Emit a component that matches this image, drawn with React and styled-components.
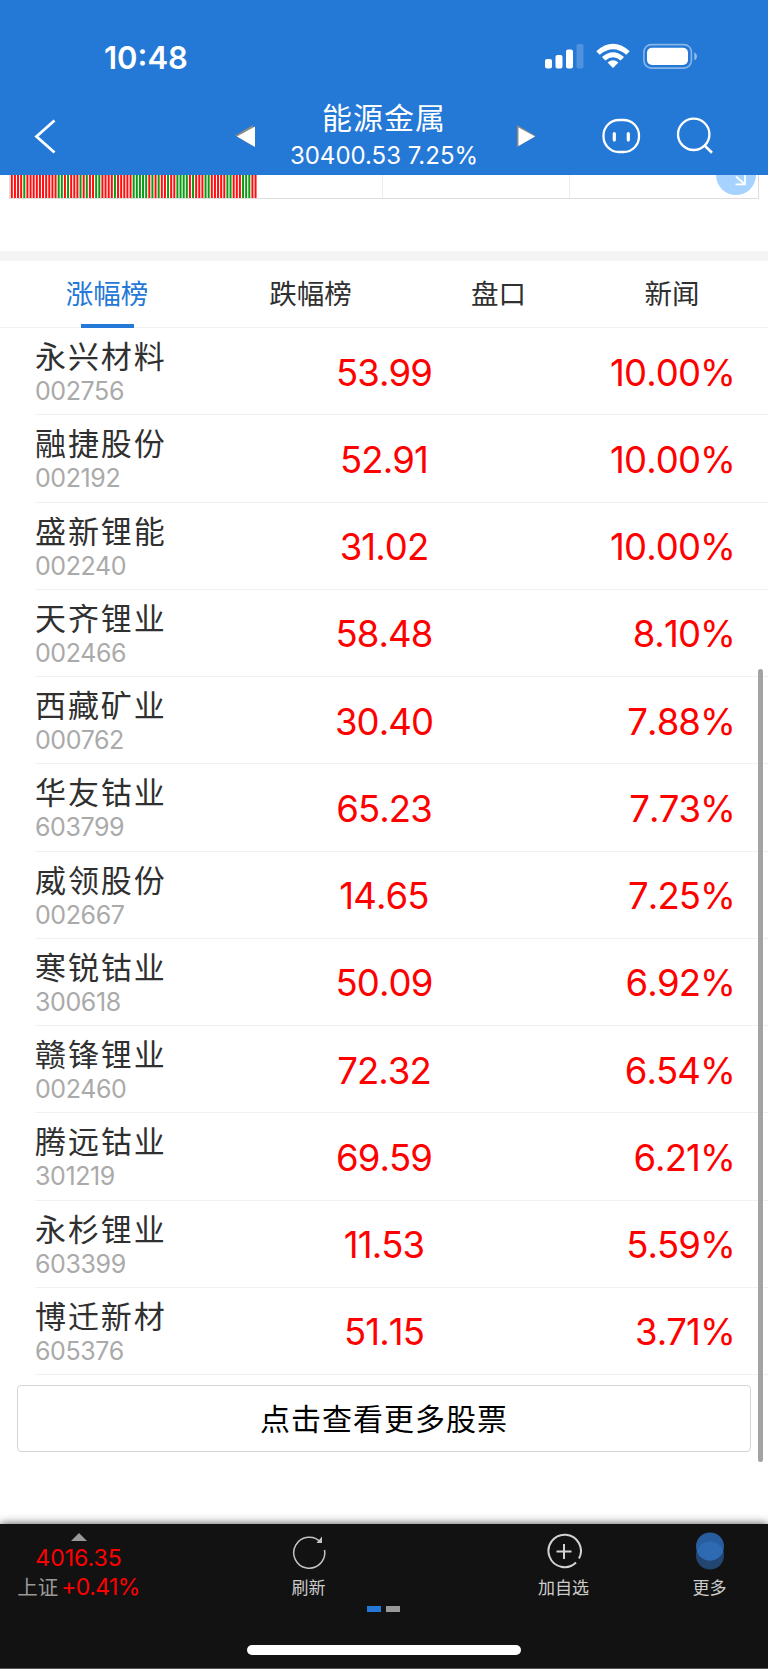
import React from "react"
import styled, { createGlobalStyle } from "styled-components"

const colors = {
  blue: "#2478d6",
  red: "#ff0000",
  dark: "#121212",
  line: "#f1f1f1",
}

const latin = `Inter, "Noto Sans CJK SC", sans-serif`

const GlobalStyle = createGlobalStyle`
  * {
    box-sizing: border-box;
  }
  body {
    margin: 0;
    background: #fff;
    font-family: ${latin};
  }
`

const stocks = [
  { name: "永兴材料", code: "002756", price: "53.99", change: "10.00%" },
  { name: "融捷股份", code: "002192", price: "52.91", change: "10.00%" },
  { name: "盛新锂能", code: "002240", price: "31.02", change: "10.00%" },
  { name: "天齐锂业", code: "002466", price: "58.48", change: "8.10%" },
  { name: "西藏矿业", code: "000762", price: "30.40", change: "7.88%" },
  { name: "华友钴业", code: "603799", price: "65.23", change: "7.73%" },
  { name: "威领股份", code: "002667", price: "14.65", change: "7.25%" },
  { name: "寒锐钴业", code: "300618", price: "50.09", change: "6.92%" },
  { name: "赣锋锂业", code: "002460", price: "72.32", change: "6.54%" },
  { name: "腾远钴业", code: "301219", price: "69.59", change: "6.21%" },
  { name: "永杉锂业", code: "603399", price: "11.53", change: "5.59%" },
  { name: "博迁新材", code: "605376", price: "51.15", change: "3.71%" },
]

// minutes in which the index fell, the rest are red
const falling = [
  4, 15, 16, 18, 22, 24, 27, 28, 33, 39, 40, 41, 42, 43, 45, 47, 50, 53, 54,
  55, 56, 58, 62, 63, 69, 70, 74, 75, 76,
]

const VolumeBars = () => (
  <svg width="248" height="23" viewBox="0 0 248 23">
    {Array.from({ length: 79 }, (_, i) => (
      <rect
        key={i}
        x={0.8 + i * 3.125}
        width="2"
        height="23"
        fill={falling.includes(i) ? "#0c9a14" : "#ff0c0c"}
      />
    ))}
  </svg>
)

const StatusIcons = () => (
  <svg width="153" height="28" viewBox="0 0 153 28">
    <g fill="#fff">
      <rect x="0" y="16" width="7" height="9.4" rx="2" />
      <rect x="10.5" y="12" width="7" height="13.4" rx="2" />
      <rect x="21" y="6.5" width="7" height="18.9" rx="2" />
      <rect x="31.5" y="1" width="7" height="24.4" rx="2" opacity=".2" />
      <path d="M51.3 8.2Q68 -6.6 84.7 8.2L81.3 11.7Q68 .6 54.7 11.7Z" />
      <path d="M57 14Q68 4.3 79 14L75.6 17.4Q68 11.2 60.4 17.4Z" />
      <path d="M62.6 19.5Q68 15 73.4 19.5L68 25Z" />
      <rect x="102" y="4.7" width="41" height="17.3" rx="5" />
      <path d="M149.3 9.2Q152 10.5 152 13.2Q152 16 149.3 17.3Z" opacity=".5" />
    </g>
    <rect x="98.9" y="1.6" width="47.5" height="23.5" rx="7.5" fill="none" stroke="#fff" strokeOpacity=".45" strokeWidth="1.6" />
  </svg>
)

const BackIcon = () => (
  <svg width="24" height="38" viewBox="0 0 24 38" fill="none" stroke="#fff" strokeWidth="2.8">
    <path d="M20.5 3.5L2.5 19.5L20.5 35.5" />
  </svg>
)

const PrevIcon = () => (
  <svg width="22" height="24" viewBox="0 0 22 24">
    <path d="M1 11.5L19 1V22Z" fill="#8b8b86" />
    <path d="M3 12.5L21 2.5V23Z" fill="#fff" />
  </svg>
)

const NextIcon = () => (
  <svg width="22" height="24" viewBox="0 0 22 24">
    <path d="M1 1L20 12L1 23Z" fill="#8b8b86" />
    <path d="M2.5 3.5L19 12.5L2.5 22Z" fill="#fff" />
  </svg>
)

const RobotIcon = () => (
  <svg width="40" height="36" viewBox="0 0 40 36" fill="none" stroke="#fff">
    <rect x="1.5" y="2" width="35.5" height="32" rx="15.5" strokeWidth="2.3" />
    <path d="M12.3 15.5V22M26.3 15.5V22" strokeWidth="3.2" strokeLinecap="round" />
  </svg>
)

const SearchIcon = () => (
  <svg width="40" height="40" viewBox="0 0 40 40" fill="none" stroke="#fff">
    <circle cx="17.7" cy="18.3" r="15.7" strokeWidth="2.3" />
    <path d="M28 29L36 36.8" strokeWidth="2.6" />
  </svg>
)

const ShrinkIcon = () => (
  <svg width="40" height="21" viewBox="0 0 40 21">
    <circle cx="20" cy="0" r="20" fill="#a6d2ff" />
    <path d="M20 1.5L28.5 9M29 0V9.3H19.5" fill="none" stroke="#fff" strokeWidth="1.7" />
  </svg>
)

const RefreshIcon = () => (
  <svg width="34" height="38" viewBox="0 0 34 38" fill="none">
    <path d="M29 10.6A15.5 15.5 0 1 0 32.5 18" stroke="#c4c4c4" strokeWidth="1.5" />
    <path d="M30 4.5V11H24.5Z" fill="#c4c4c4" />
  </svg>
)

const AddIcon = () => (
  <svg width="36" height="38" viewBox="0 0 36 38" fill="none" stroke="#d2d2d2" strokeWidth="2">
    <path d="M30 30.5A16.2 16.2 0 1 1 33 26.5" />
    <path d="M18 12V27M10.5 19.5H25.5" />
  </svg>
)

const MoreIcon = () => (
  <svg width="30" height="38" viewBox="0 0 30 38">
    <circle cx="15" cy="23.5" r="14" fill="#22466f" />
    <circle cx="15" cy="14.5" r="14" fill="#285d9f" />
    <path d="M1.7 19A14 14 0 0 1 28.3 19A14 14 0 0 1 1.7 19Z" fill="#2d6ab2" />
  </svg>
)

const StockRow = ({ stock }) => {
  const { name, code, price, change } = stock
  return (
    <Row>
      <div>
        <Name>{name}</Name>
        <Code>{code}</Code>
      </div>
      <Figure $align="center">{price}</Figure>
      <Figure $align="right">{change}</Figure>
    </Row>
  )
}

const App = () => (
  <Screen>
    <GlobalStyle />
    <Header>
      <StatusBar>
        <Clock>10:48</Clock>
        <StatusIcons />
      </StatusBar>
      <NavBar>
        <BackIcon />
        <Switcher>
          <PrevIcon />
          <Heading>
            <Title>能源金属</Title>
            <Quote>30400.53 7.25%</Quote>
          </Heading>
          <NextIcon />
        </Switcher>
        <Actions>
          <RobotIcon />
          <SearchIcon />
        </Actions>
      </NavBar>
    </Header>
    <ChartStrip>
      <ChartCell>
        <VolumeBars />
      </ChartCell>
      <ChartCell />
      <ChartCell $end>
        <ShrinkIcon />
      </ChartCell>
    </ChartStrip>
    <Divider />
    <Tabs>
      <Tab $active>涨幅榜</Tab>
      <Tab>跌幅榜</Tab>
      <Tab>盘口</Tab>
      <Tab>新闻</Tab>
    </Tabs>
    <List>
      {stocks.map(stock => (
        <StockRow key={stock.code} stock={stock} />
      ))}
      <ScrollThumb />
    </List>
    <MoreButton>点击查看更多股票</MoreButton>
    <Footer>
      <Toolbar>
        <Index>
          <Caret />
          <div>4016.35</div>
          <IndexChange>
            <span>上证</span>+0.41%
          </IndexChange>
        </Index>
        <Tool>
          <RefreshIcon />
          <span>刷新</span>
        </Tool>
        <Tool>
          <AddIcon />
          <span>加自选</span>
        </Tool>
        <Tool>
          <MoreIcon />
          <span>更多</span>
        </Tool>
      </Toolbar>
      <Pager>
        <Dash $active />
        <Dash />
      </Pager>
      <HomeBar />
    </Footer>
  </Screen>
)

const Screen = styled.div`
  display: flex;
  flex-direction: column;
  width: 768px;
  height: 1669px;
  overflow: hidden;
  background: #fff;
`

const Header = styled.header`
  flex: none;
  height: 175px;
  background: ${colors.blue};
  color: #fff;
`

const StatusBar = styled.div`
  display: flex;
  justify-content: space-between;
  height: 96px;
  padding: 43px 70px 0 104px;
`

const Clock = styled.div`
  font-size: 31px;
  font-weight: 600;
  line-height: 29px;
`

const NavBar = styled.div`
  display: grid;
  grid-template-columns: 200px 304px 1fr;
  align-items: center;
  height: 79px;
  padding-left: 34px;
`

const Switcher = styled.div`
  display: grid;
  grid-template-columns: 22px 1fr 22px;
  align-items: center;
  height: 79px;
`

const Heading = styled.div`
  padding: 3px 4px 0 0;
  text-align: center;
`

const Title = styled.div`
  font-size: 30px;
  line-height: 36px;
  letter-spacing: 1px;
`

const Quote = styled.div`
  padding-top: 2px;
  font-size: 24px;
  line-height: 36px;
  white-space: nowrap;
`

const Actions = styled.div`
  display: flex;
  gap: 34px;
  align-items: center;
  padding: 1px 0 0 64px;
`

const ChartStrip = styled.div`
  display: grid;
  flex: none;
  grid-template-columns: 373px 187px 1fr;
  height: 24px;
  margin: 0 9px;
  border: solid #dedede;
  border-width: 0 1px 1px;
`

const ChartCell = styled.div`
  display: flex;
  justify-content: ${props => (props.$end ? "flex-end" : "flex-start")};
  padding-right: ${props => (props.$end ? "2px" : 0)};
  border-right: ${props => (props.$end ? "none" : "1px solid #ececec")};
`

const Divider = styled.div`
  flex: none;
  height: 10px;
  margin-top: 52px;
  background: #f4f4f4;
`

const Tabs = styled.nav`
  display: grid;
  flex: none;
  grid-template-columns: 214px 193px 183px 164px;
  height: 67px;
  border-bottom: 1px solid ${colors.line};
`

const Tab = styled.div`
  display: flex;
  flex-direction: column;
  align-items: center;
  height: 67px;
  color: ${props => (props.$active ? colors.blue : "#303030")};
  font-size: 27.5px;
  line-height: 67px;

  &::after {
    flex: none;
    width: 53px;
    height: 4px;
    margin-top: -4px;
    background: ${props => (props.$active ? colors.blue : "transparent")};
    content: "";
  }
`

const List = styled.section`
  position: relative;
  flex: none;
  padding-left: 35px;
`

const Row = styled.div`
  display: grid;
  grid-template-columns: 249px 200px 1fr;
  align-items: center;
  height: 87.25px;
  padding: 3px 33px 0 0;
  border-bottom: 1px solid ${colors.line};
`

const Name = styled.div`
  color: #303030;
  font-size: 31px;
  line-height: 38px;
  letter-spacing: 1.9px;
`

const Code = styled.div`
  color: #aaa;
  font-size: 25px;
  line-height: 31px;
  letter-spacing: -0.4px;
`

const Figure = styled.div`
  color: ${colors.red};
  font-size: 36.5px;
  font-kerning: none;
  letter-spacing: -0.9px;
  text-align: ${props => props.$align};
`

const ScrollThumb = styled.div`
  position: absolute;
  top: 341px;
  right: 5px;
  width: 5px;
  height: 793px;
  border-radius: 3px;
  background: #a3a3a3;
`

const MoreButton = styled.button`
  flex: none;
  height: 67px;
  margin: 10px 17px 0;
  padding: 0 0 3px;
  border: 1px solid #d4d4d4;
  border-radius: 4px;
  background: #fff;
  color: #000;
  font-family: ${latin};
  font-size: 30px;
  letter-spacing: 1px;
`

const Footer = styled.footer`
  display: flex;
  flex-direction: column;
  align-items: center;
  height: 145px;
  margin-top: auto;
  border-bottom: 1px solid #555;
  background: ${colors.dark};
  box-shadow: 0 0 9px rgba(0, 0, 0, 0.7);
`

const Toolbar = styled.div`
  display: grid;
  grid-template-columns: 157px 303px 207px 85px;
  width: 768px;
  height: 82px;
`

const Index = styled.div`
  display: flex;
  flex-direction: column;
  align-items: center;
  color: ${colors.red};
  font-size: 23px;
  line-height: 29px;
`

const Caret = styled.div`
  margin: 9px 0 3px;
  border: solid transparent;
  border-width: 0 8px 8px;
  border-bottom-color: #999;
`

const IndexChange = styled.div`
  letter-spacing: -0.6px;
  white-space: nowrap;

  span {
    margin-right: 3px;
    color: #999;
    font-size: 20.5px;
    letter-spacing: 0;
  }
`

const Tool = styled.div`
  display: flex;
  flex-direction: column;
  align-items: center;
  padding-top: 8px;
  color: #ccc;
  font-size: 17px;
  line-height: 24px;

  svg {
    flex: none;
    margin-bottom: 6px;
  }
`

const Pager = styled.div`
  display: flex;
  gap: 5px;
  padding-right: 2px;
`

const Dash = styled.div`
  width: 14px;
  height: 6px;
  background: ${props => (props.$active ? colors.blue : "#999")};
`

const HomeBar = styled.div`
  width: 274px;
  height: 10px;
  margin-top: 33px;
  border-radius: 5px;
  background: #fff;
`

export default App
